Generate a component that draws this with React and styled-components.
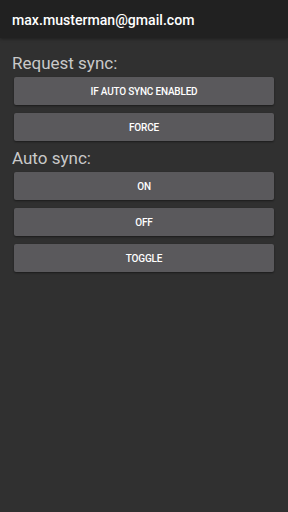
import React from 'react'
import styled, { createGlobalStyle } from 'styled-components'

const Global = createGlobalStyle`
  html, body { margin: 0; padding: 0; background: #303030; }
  body { font-family: Roboto, "Liberation Sans", sans-serif; }
`

const sections = [
  { title: 'Request sync:', buttons: ['IF AUTO SYNC ENABLED', 'FORCE'] },
  { title: 'Auto sync:', buttons: ['ON', 'OFF', 'TOGGLE'] },
]

export default function App() {
  return (
    <>
      <Global />
      <Screen>
        <Toolbar>
          <Account>max.musterman@gmail.com</Account>
        </Toolbar>
        <Content>
          {sections.map((s) => (
            <Section key={s.title}>
              <Title>{s.title}</Title>
              <Buttons>
                {s.buttons.map((b) => (
                  <Button key={b}>{b}</Button>
                ))}
              </Buttons>
            </Section>
          ))}
        </Content>
      </Screen>
    </>
  )
}

const Screen = styled.div`
  width: 288px;
  height: 512px;
  background: #303030;
  display: flex;
  flex-direction: column;
`
const Toolbar = styled.div`
  height: 38px;
  background: #212121;
  display: flex;
  align-items: center;
  padding: 0 12px;
  box-shadow: 0 1px 3px rgba(0, 0, 0, 0.4);
`
const Account = styled.div`
  color: #fff;
  font-size: 14.1px;
  font-weight: 500;
  margin-top: 1px;
`
const Content = styled.div`
  padding: 14px 14px 0 12px;
  display: flex;
  flex-direction: column;
  gap: 6px;
`
const Section = styled.div`
  display: flex;
  flex-direction: column;
`
const Title = styled.div`
  color: #c9c9c9;
  font-size: 17px;
  line-height: 22px;
  margin-bottom: 3px;
`
const Buttons = styled.div`
  display: flex;
  flex-direction: column;
  gap: 8px;
  padding-left: 2px;
`
const Button = styled.button`
  height: 28px;
  border: none;
  border-radius: 2px;
  background: #5a595c;
  color: #fff;
  font-family: Roboto, "Liberation Sans", sans-serif;
  font-size: 10px;
  letter-spacing: -0.2px;
  font-weight: 500;
  box-shadow: 0 1px 2px rgba(0, 0, 0, 0.45);
  padding: 0;
`
